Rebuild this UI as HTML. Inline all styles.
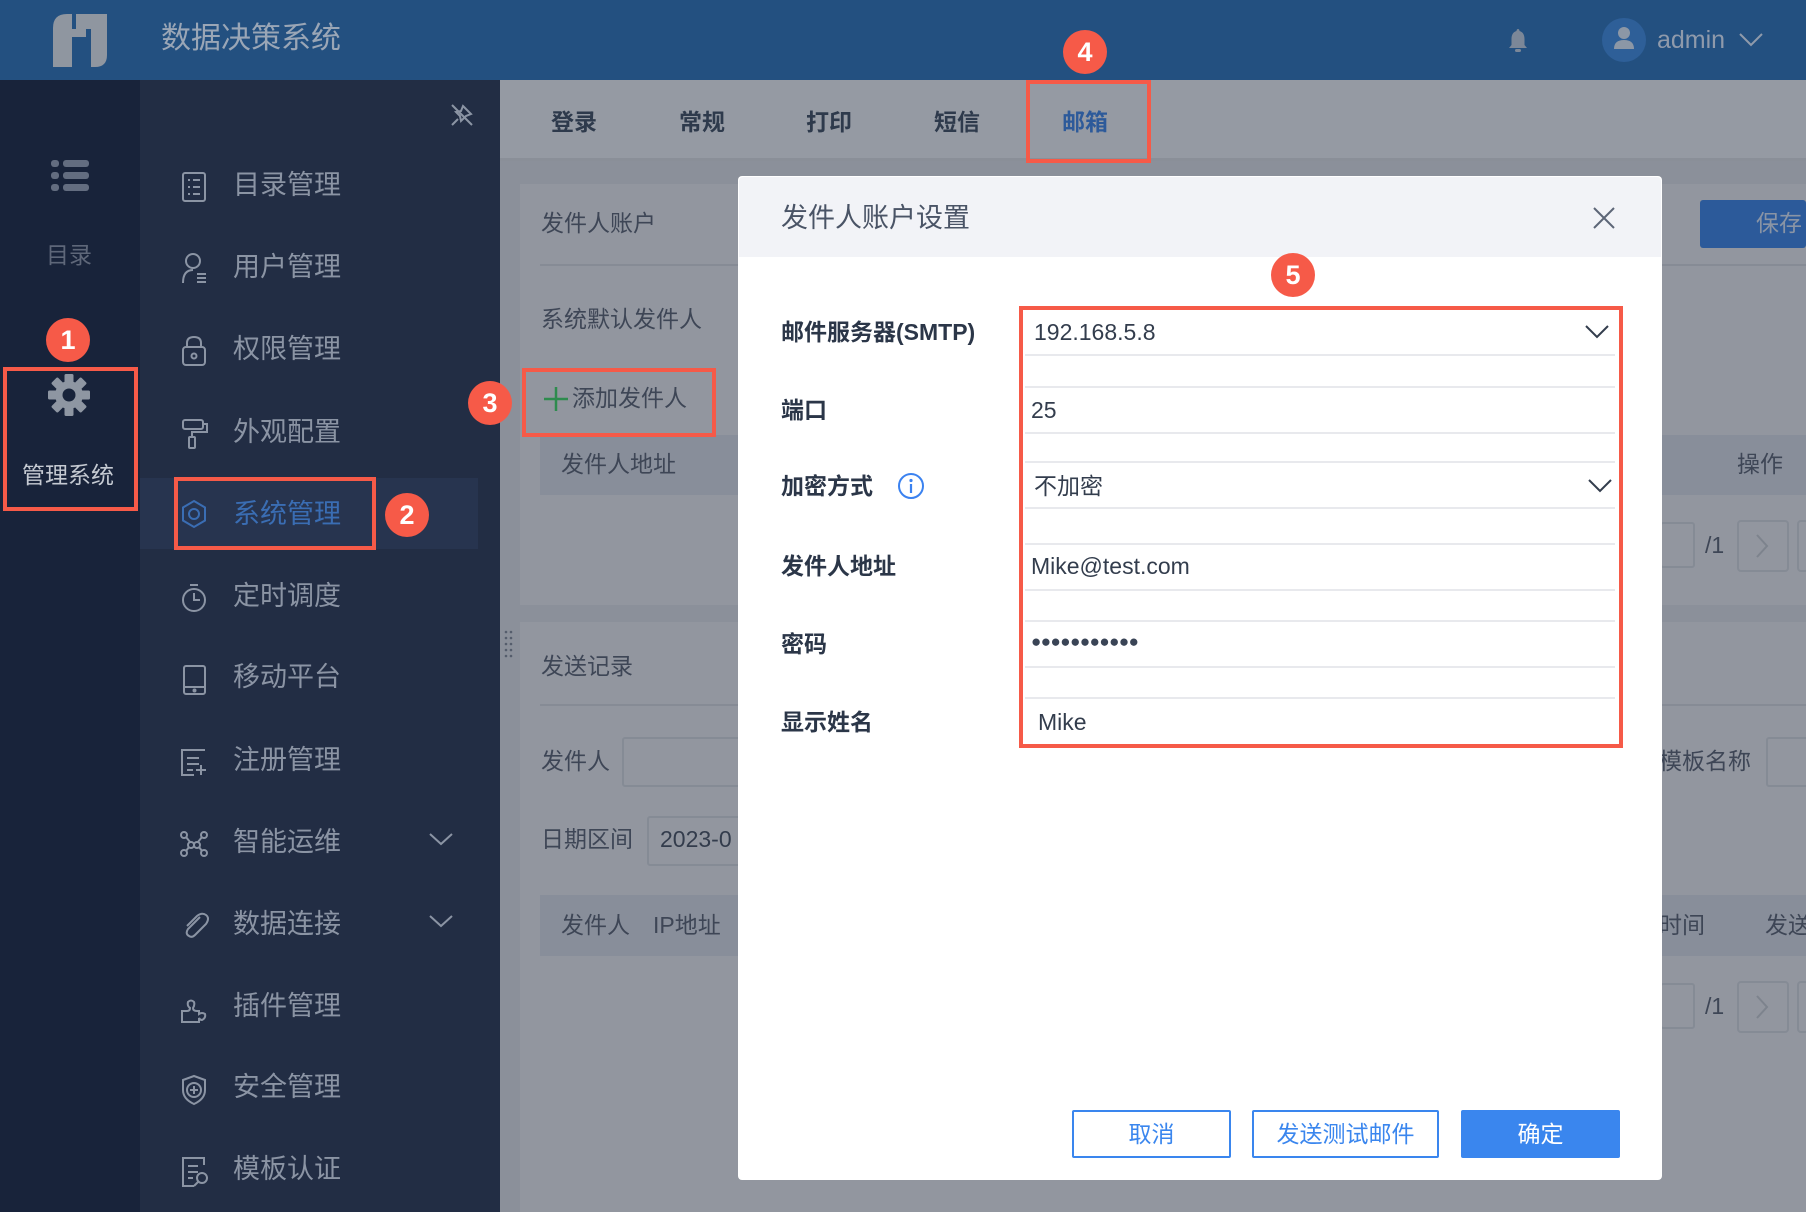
<!DOCTYPE html>
<html><head><meta charset="utf-8"><style>
*{margin:0;padding:0;box-sizing:border-box}
body{width:1806px;height:1212px;overflow:hidden;position:relative;background:#8b909a;font-family:"Liberation Sans","Noto Sans CJK SC",sans-serif}
.a{position:absolute}
.t{position:absolute;white-space:nowrap;line-height:1}
.badge{position:absolute;width:44px;height:44px;border-radius:50%;background:#f65a48;color:#fff;font-weight:bold;font-size:27px;text-align:center;line-height:44px}
.rb{position:absolute;border:4px solid #f65a48}
.mi{position:absolute;left:233px;font-size:27px;color:#8b94a4;line-height:1}
.lbl{position:absolute;left:781px;font-size:23px;font-weight:bold;color:#2b3648;line-height:1}
.val{position:absolute;font-size:23px;color:#333d4d;line-height:1}
.hl{position:absolute;left:1025px;width:590px;height:2px;background:#e8e9ed}
.ct{position:absolute;font-size:23px;color:#3e4656;line-height:1;white-space:nowrap}
</style></head><body>
<div class="a" style="left:0;top:0;width:1806px;height:80px;background:#235080"></div>
<svg class="a" style="left:50px;top:12px" width="60" height="58" viewBox="50 12 60 58">
<path d="M53 28 Q53 14 67 14 L72 14 L72 29 L86 29 L86 37 L72 37 L72 67 L53 67 Z" fill="#8f96a0"/>
<path d="M76 14 L107 14 L107 55 Q107 67 95 67 L91 67 L91 29 L76 29 Z" fill="#8f96a0"/>
</svg>
<div class="t" style="left:161px;top:24px;font-size:30px;color:#9aa6b6">数据决策系统</div>
<svg class="a" style="left:1506px;top:28px" width="24" height="26" viewBox="0 0 24 26"><path d="M12 1 C13 1 13.5 2 13.5 3 C17 4 18.5 7 18.5 11 L18.5 17 L21 20 L3 20 L5.5 17 L5.5 11 C5.5 7 7 4 10.5 3 C10.5 2 11 1 12 1Z" fill="#7b8798"/><rect x="9" y="21" width="6" height="3" rx="1.5" fill="#7b8798"/></svg>
<div class="a" style="left:1602px;top:18px;width:44px;height:44px;border-radius:50%;background:#2e5f98"></div>
<svg class="a" style="left:1610px;top:24px" width="28" height="30" viewBox="0 0 28 30"><circle cx="14" cy="9" r="6" fill="#8c97a6"/><path d="M4 25 Q4 16 14 16 Q24 16 24 25 Z" fill="#8c97a6"/></svg>
<div class="t" style="left:1657px;top:28px;font-size:25px;color:#8f9aab">admin</div>
<svg class="a" style="left:1738px;top:32px" width="26" height="16"><path d="M2 2 L13 13 L24 2" stroke="#8f9aab" stroke-width="2" fill="none"/></svg>

<div class="a" style="left:0;top:80px;width:140px;height:1132px;background:#18233a"></div>
<svg class="a" style="left:50px;top:158px" width="40" height="36"><g fill="#636d80"><rect x="1" y="2" width="8" height="7" rx="3"/><rect x="1" y="14" width="8" height="7" rx="3"/><rect x="1" y="26" width="8" height="7" rx="3"/><rect x="13" y="2" width="26" height="7" rx="3"/><rect x="13" y="14" width="26" height="7" rx="3"/><rect x="13" y="26" width="26" height="7" rx="3"/></g></svg>
<div class="t" style="left:46px;top:244px;font-size:23px;color:#5e6779">目录</div>
<svg class="a" style="left:48px;top:374px" width="42" height="42" viewBox="-21 -21 42 42"><g fill="#8e96a2"><circle r="14"/><g id="tt"><rect x="-4.5" y="-21" width="9" height="9" rx="1.5"/></g><use href="#tt" transform="rotate(45)"/><use href="#tt" transform="rotate(90)"/><use href="#tt" transform="rotate(135)"/><use href="#tt" transform="rotate(180)"/><use href="#tt" transform="rotate(225)"/><use href="#tt" transform="rotate(270)"/><use href="#tt" transform="rotate(315)"/></g><circle r="6.5" fill="#18233a"/></svg>
<div class="t" style="left:22px;top:464px;font-size:23px;color:#c5cad2">管理系统</div>
<div class="rb" style="left:3px;top:367px;width:135px;height:144px"></div>
<div class="badge" style="left:46px;top:318px">1</div>

<div class="a" style="left:140px;top:80px;width:360px;height:1132px;background:#222d44"></div>
<svg class="a" style="left:449px;top:102px" width="26" height="26"><g stroke="#8b94a4" stroke-width="2" fill="none"><path d="M14 4 L22 12 L17 14 L12 19 L11 14 L7 10 L12 9 Z"/><path d="M9 17 L3 23"/><path d="M3 3 L23 23"/></g></svg>
<div class="a" style="left:140px;top:478px;width:338px;height:71px;background:#27344f"></div>
<div class="mi" style="top:172px">目录管理</div>
<div class="mi" style="top:254px">用户管理</div>
<div class="mi" style="top:336px">权限管理</div>
<div class="mi" style="top:419px">外观配置</div>
<div class="mi" style="top:501px;color:#3a6db3">系统管理</div>
<div class="mi" style="top:583px">定时调度</div>
<div class="mi" style="top:664px">移动平台</div>
<div class="mi" style="top:747px">注册管理</div>
<div class="mi" style="top:829px">智能运维</div>
<div class="mi" style="top:911px">数据连接</div>
<div class="mi" style="top:993px">插件管理</div>
<div class="mi" style="top:1074px">安全管理</div>
<div class="mi" style="top:1156px">模板认证</div>
<svg class="a" style="left:180px;top:170px" width="32" height="1030" fill="none" stroke="#8b94a4" stroke-width="2">
<rect x="3" y="3" width="22" height="28" rx="2"/><path d="M8 10h2M13 10h7M8 17h2M13 17h7M8 24h2M13 24h7"/>
<g transform="translate(0,82)"><circle cx="13" cy="9" r="7"/><path d="M3 31 Q3 18 13 18"/><path d="M17 22h9M17 26h9M17 30h9"/></g>
<g transform="translate(0,164)"><rect x="3" y="13" width="22" height="18" rx="3"/><path d="M7 13 V9 Q7 3 14 3 Q21 3 21 9 V13"/><circle cx="14" cy="22" r="2.5"/></g>
<g transform="translate(0,247)"><rect x="3" y="3" width="20" height="9" rx="2"/><path d="M23 7 H27 V15 H12 V20"/><rect x="9" y="20" width="6" height="11" rx="1"/></g>
<g transform="translate(0,329)" stroke="#3a6db3"><circle cx="14" cy="15" r="5"/><path d="M14 2 L25 8.5 L25 21.5 L14 28 L3 21.5 L3 8.5 Z"/></g>
<g transform="translate(0,411)"><circle cx="14" cy="19" r="11"/><path d="M14 12v7h6M10 4h8"/></g>
<g transform="translate(0,493)"><rect x="4" y="3" width="21" height="28" rx="2"/><path d="M4 24h21"/><circle cx="14.5" cy="27.5" r="1" fill="#8b94a4"/></g>
<g transform="translate(0,575)"><path d="M25 5 H2 V30 H14 M7 13h12M7 19h12M7 25h6M21 20v10M16 25h10"/></g>
<g transform="translate(0,657)"><circle cx="4" cy="8" r="3"/><circle cx="24" cy="8" r="3"/><circle cx="4" cy="26" r="3"/><circle cx="24" cy="26" r="3"/><circle cx="11" cy="18" r="3"/><circle cx="17" cy="18" r="3"/><path d="M6 10 L10 15M22 10 L18 15M6 24 L9 20M22 24 L19 20"/></g>
<g transform="translate(0,739)"><path d="M20 8 L8 20 Q5 25 9 27 Q12 29 15 26 L26 15 Q30 9 26 6 Q22 3 17 7 L7 17"/></g>
<g transform="translate(0,821)"><path d="M2 20 H7 Q10 20 10 17 Q7 15 8 11 Q11 8 14 11 Q15 14 13 17 Q13 20 17 20 H19 V23 Q22 21 25 23 Q26 27 22 29 Q20 29 19 27 V31 H2 Z"/></g>
<g transform="translate(0,903)"><path d="M14 3 L25 7 V17 Q25 26 14 31 Q3 26 3 17 V7 Z"/><circle cx="14" cy="17" r="7"/><path d="M14 13v8M10 17h8"/></g>
<g transform="translate(0,985)"><path d="M24 10 V3 H3 V31 H14 M8 11h10M8 17h10M8 23h5"/><circle cx="22" cy="23" r="5"/><path d="M18 27 L14 31"/></g>
</svg>
<svg class="a" style="left:428px;top:832px" width="26" height="100" fill="none" stroke="#8b94a4" stroke-width="2"><path d="M2 2 L13 12 L24 2"/><path d="M2 84 L13 94 L24 84"/></svg>
<div class="rb" style="left:174px;top:477px;width:202px;height:73px"></div>
<div class="badge" style="left:385px;top:493px">2</div>

<div class="a" style="left:500px;top:80px;width:1306px;height:81px;background:#959aa3;border-bottom:3px solid #8a8f98"></div>
<div class="t" style="left:551px;top:111px;font-size:23px;font-weight:bold;color:#2e3a4c">登录</div>
<div class="t" style="left:679px;top:111px;font-size:23px;font-weight:bold;color:#2e3a4c">常规</div>
<div class="t" style="left:806px;top:111px;font-size:23px;font-weight:bold;color:#2e3a4c">打印</div>
<div class="t" style="left:934px;top:111px;font-size:23px;font-weight:bold;color:#2e3a4c">短信</div>
<div class="t" style="left:1062px;top:111px;font-size:23px;font-weight:bold;color:#2d5a9a">邮箱</div>
<div class="rb" style="left:1026px;top:80px;width:125px;height:83px"></div>
<div class="badge" style="left:1063px;top:30px">4</div>

<div class="a" style="left:520px;top:184px;width:1286px;height:421px;background:#92969f"></div>
<div class="ct" style="left:541px;top:212px">发件人账户</div>
<div class="a" style="left:540px;top:264px;width:1266px;height:2px;background:#868b95"></div>
<div class="ct" style="left:541px;top:308px">系统默认发件人</div>
<div class="ct" style="left:572px;top:387px">添加发件人</div>
<svg class="a" style="left:543px;top:386px" width="26" height="26"><path d="M13 1v24M1 13h24" stroke="#2e8b4e" stroke-width="2.5"/></svg>
<div class="a" style="left:540px;top:435px;width:1266px;height:60px;background:#888e9a"></div>
<div class="ct" style="left:561px;top:453px">发件人地址</div>
<div class="ct" style="left:1737px;top:453px">操作</div>
<div class="rb" style="left:522px;top:368px;width:194px;height:69px"></div>
<div class="badge" style="left:468px;top:381px">3</div>
<div class="a" style="left:1700px;top:200px;width:106px;height:48px;background:#2c5a9a;border-radius:3px"></div>
<div class="t" style="left:1756px;top:212px;font-size:23px;color:#8994a5">保存</div>
<div class="a" style="left:1660px;top:522px;width:35px;height:46px;border:2px solid #858b95;border-radius:3px"></div>
<div class="ct" style="left:1705px;top:534px">/1</div>
<div class="a" style="left:1737px;top:520px;width:52px;height:52px;border:2px solid #858b95;border-radius:4px"></div>
<svg class="a" style="left:1754px;top:532px" width="16" height="28"><path d="M3 3 L13 14 L3 25" stroke="#7d838d" stroke-width="2" fill="none"/></svg>
<div class="a" style="left:1797px;top:520px;width:12px;height:52px;border:2px solid #858b95;border-radius:4px"></div>

<svg class="a" style="left:504px;top:630px" width="10" height="30"><g fill="#555d6c"><circle cx="2" cy="2" r="1.3"/><circle cx="7" cy="2" r="1.3"/><circle cx="2" cy="8" r="1.3"/><circle cx="7" cy="8" r="1.3"/><circle cx="2" cy="14" r="1.3"/><circle cx="7" cy="14" r="1.3"/><circle cx="2" cy="20" r="1.3"/><circle cx="7" cy="20" r="1.3"/><circle cx="2" cy="26" r="1.3"/><circle cx="7" cy="26" r="1.3"/></g></svg>
<div class="a" style="left:520px;top:622px;width:1286px;height:590px;background:#92969f"></div>
<div class="ct" style="left:541px;top:655px">发送记录</div>
<div class="a" style="left:540px;top:704px;width:1266px;height:2px;background:#868b95"></div>
<div class="ct" style="left:541px;top:750px">发件人</div>
<div class="a" style="left:622px;top:737px;width:130px;height:50px;border:2px solid #858b95;border-radius:3px"></div>
<div class="ct" style="left:1659px;top:750px">模板名称</div>
<div class="a" style="left:1766px;top:737px;width:60px;height:50px;border:2px solid #858b95;border-radius:3px"></div>
<div class="ct" style="left:541px;top:828px">日期区间</div>
<div class="a" style="left:647px;top:816px;width:120px;height:50px;border:2px solid #858b95;border-radius:3px"></div>
<div class="ct" style="left:660px;top:828px;color:#333c4c">2023-0</div>
<div class="a" style="left:540px;top:895px;width:1266px;height:61px;background:#888e9a"></div>
<div class="ct" style="left:561px;top:914px">发件人</div>
<div class="ct" style="left:653px;top:914px">IP地址</div>
<div class="ct" style="left:1659px;top:914px">时间</div>
<div class="ct" style="left:1765px;top:914px">发送</div>
<div class="a" style="left:1660px;top:983px;width:35px;height:46px;border:2px solid #858b95;border-radius:3px"></div>
<div class="ct" style="left:1705px;top:995px">/1</div>
<div class="a" style="left:1737px;top:981px;width:52px;height:52px;border:2px solid #858b95;border-radius:4px"></div>
<svg class="a" style="left:1754px;top:993px" width="16" height="28"><path d="M3 3 L13 14 L3 25" stroke="#7d838d" stroke-width="2" fill="none"/></svg>
<div class="a" style="left:1797px;top:981px;width:12px;height:52px;border:2px solid #858b95;border-radius:4px"></div>

<div class="a" style="left:738px;top:176px;width:924px;height:1004px;background:#fff;border-radius:4px"></div>
<div class="a" style="left:739px;top:177px;width:922px;height:80px;background:#f2f3f7;border-radius:4px 4px 0 0"></div>
<div class="t" style="left:781px;top:205px;font-size:27px;color:#4a5466">发件人账户设置</div>
<svg class="a" style="left:1592px;top:206px" width="24" height="24"><path d="M2 2 L22 22 M22 2 L2 22" stroke="#5d6677" stroke-width="2"/></svg>

<div class="lbl" style="top:321px">邮件服务器(SMTP)</div>
<div class="lbl" style="top:399px">端口</div>
<div class="lbl" style="top:475px">加密方式</div>
<svg class="a" style="left:897px;top:472px" width="28" height="28"><circle cx="14" cy="14" r="12" stroke="#3b82f0" stroke-width="2" fill="none"/><circle cx="14" cy="8.5" r="1.6" fill="#3b82f0"/><path d="M14 12v9" stroke="#3b82f0" stroke-width="2.2"/></svg>
<div class="lbl" style="top:555px">发件人地址</div>
<div class="lbl" style="top:633px">密码</div>
<div class="lbl" style="top:711px">显示姓名</div>

<div class="hl" style="top:354px"></div><div class="hl" style="top:386px"></div>
<div class="hl" style="top:432px"></div><div class="hl" style="top:461px"></div>
<div class="hl" style="top:507px"></div><div class="hl" style="top:543px"></div>
<div class="hl" style="top:589px"></div><div class="hl" style="top:620px"></div>
<div class="hl" style="top:666px"></div><div class="hl" style="top:697px"></div>
<div class="val" style="left:1034px;top:321px">192.168.5.8</div>
<svg class="a" style="left:1584px;top:324px" width="26" height="16"><path d="M2 2 L13 13 L24 2" stroke="#333d4d" stroke-width="2" fill="none"/></svg>
<div class="val" style="left:1031px;top:399px">25</div>
<div class="val" style="left:1034px;top:475px">不加密</div>
<svg class="a" style="left:1587px;top:478px" width="26" height="16"><path d="M2 2 L13 13 L24 2" stroke="#333d4d" stroke-width="2" fill="none"/></svg>
<div class="val" style="left:1031px;top:555px">Mike@test.com</div>
<div class="val" style="left:1031px;top:633px;font-size:17px;letter-spacing:-0.5px;color:#3a4456">●●●●●●●●●●●</div>
<div class="val" style="left:1038px;top:711px">Mike</div>
<div class="rb" style="left:1019px;top:306px;width:604px;height:442px"></div>
<div class="badge" style="left:1271px;top:253px">5</div>

<div class="a" style="left:1072px;top:1110px;width:159px;height:48px;border:2px solid #3a86ee;border-radius:2px;color:#3a86ee;font-size:23px;text-align:center;line-height:44px">取消</div>
<div class="a" style="left:1252px;top:1110px;width:187px;height:48px;border:2px solid #3a86ee;border-radius:2px;color:#3a86ee;font-size:23px;text-align:center;line-height:44px">发送测试邮件</div>
<div class="a" style="left:1461px;top:1110px;width:159px;height:48px;background:#3a86ee;border-radius:2px;color:#fff;font-size:23px;text-align:center;line-height:48px">确定</div>
</body></html>
